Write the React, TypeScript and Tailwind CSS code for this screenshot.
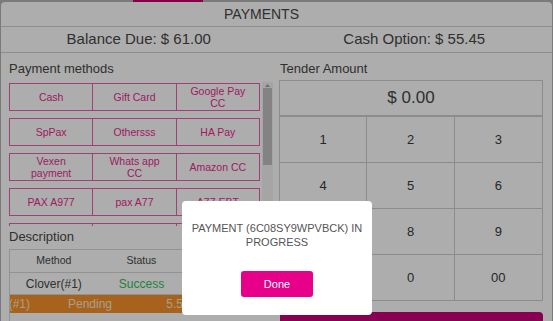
import React from "react";

const methods = [
  ["Cash", "Gift Card", "Google Pay CC"],
  ["SpPax", "Othersss", "HA Pay"],
  ["Vexen payment", "Whats app CC", "Amazon CC"],
  ["PAX A977", "pax A77", "A77 EBT"],
  ["Venmo", "Zelle", "Check"],
];

const keys = ["1", "2", "3", "4", "5", "6", "7", "8", "9", ".", "0", "00"];

const App = () => {
  return (
    <div className="relative w-[553px] h-[321px] overflow-hidden bg-[#b4b4b4] font-['Liberation_Sans',Arial,sans-serif] text-[#474747]">
      <div className="flex h-[2px]">
        <div className="ml-[133px] w-[70px] bg-[#c4006c]" />
      </div>

      <div className="mx-[1px] h-[319px] bg-white rounded-t-[4px] overflow-hidden">
        <div className="h-[25px] flex items-center justify-center pr-[30px] border-b border-[#d0d0d0] text-[14px]">
          PAYMENTS
        </div>
        <div className="h-[26px] flex items-center border-b border-[#d0d0d0] text-[15px]">
          <div className="flex-1 text-center">Balance Due: $ 61.00</div>
          <div className="flex-1 text-center">Cash Option: $ 55.45</div>
        </div>

        <div className="flex gap-[6px] px-[8px] pt-[8px]">
          {/* left column */}
          <div className="w-[264px] flex flex-col">
            <div className="text-[13px] leading-[16px]">Payment methods</div>
            <div className="mt-[5px] h-[144px] shrink-0 flex gap-[2px] overflow-hidden">
              <div className="w-[251px] pt-[1px] flex flex-col gap-[7px]">
                {methods.map((row, i) => (
                  <div key={i} className="grid grid-cols-3 shrink-0 border-r border-[#ef5fae]">
                    {row.map((m) => (
                      <div
                        key={m}
                        className="h-[28px] border-l border-y border-[#ef5fae] flex items-center justify-center text-center px-[8px] text-[10.5px] leading-[12px] text-[#ea2a93]"
                      >
                        {m}
                      </div>
                    ))}
                  </div>
                ))}
              </div>
              <div className="w-[11px] bg-[#f3f3f3] flex flex-col">
                <div className="h-[6px] flex items-center justify-center">
                  <svg width="5" height="3" viewBox="0 0 5 3">
                    <path d="M0 3 L2.5 0 L5 3 Z" fill="#a3a3a3" />
                  </svg>
                </div>
                <div className="mx-[1px] h-[77px] bg-[#c1c1c1]" />
              </div>
            </div>

            <div className="mt-[3px] text-[13px] leading-[16px]">Description</div>
            <div className="mt-[4px] border-l border-[#d8d8d8]">
              <div className="grid grid-cols-3 h-[24px] border-y border-[#d8d8d8] text-[10.5px] items-center text-center">
                <div>Method</div>
                <div>Status</div>
                <div>Amount</div>
              </div>
              <div className="grid grid-cols-3 h-[22px] border-b border-[#d8d8d8] text-[12px] items-center text-center">
                <div>Clover(#1)</div>
                <div className="text-[#32c060]">Success</div>
                <div>55.45</div>
              </div>
              <div className="h-[18px] bg-[#f6932a] overflow-hidden">
                <div className="-ml-[52px] w-[264px] grid grid-cols-3 h-full items-center text-center text-[12px] text-[#fbe7cf]">
                  <div>Clover(#1)</div>
                  <div>Pending</div>
                  <div>5.55</div>
                </div>
              </div>
              <div className="h-[20px] border-b border-[#d8d8d8]" />
            </div>
          </div>

          {/* right column */}
          <div className="w-[264px] flex flex-col">
            <div className="text-[13px] leading-[16px] pl-[1px]">Tender Amount</div>
            <div className="mt-[3px] h-[36px] border border-[#cfcfcf] flex items-center justify-center text-[17px]">
              $ 0.00
            </div>
            <div className="grid grid-cols-3 border-x border-b border-[#cfcfcf]">
              {keys.map((k, i) => (
                <div
                  key={k}
                  className={
                    "h-[46px] flex items-center justify-center text-[13px] text-[#3a3a3a] border-t border-[#cfcfcf] " +
                    (i % 3 !== 2 ? "border-r" : "")
                  }
                >
                  {k}
                </div>
              ))}
            </div>
            <div className="mt-[11px] h-[40px] shrink-0 ml-[1px] bg-[#c8007a] rounded-t-[4px] text-white text-[13px] text-center pt-[8px]">
              Submit
            </div>
          </div>
        </div>
      </div>

      <div className="absolute inset-0 bg-[rgba(0,0,0,0.32)]" />

      <div className="absolute left-[182px] top-[201px] w-[190px] h-[114px] bg-white rounded-[4px] flex flex-col items-center pt-[20px] px-[8px]">
        <p className="text-[11px] leading-[14px] text-[#555] text-center">
          PAYMENT (6C08SY9WPVBCK) IN PROGRESS
        </p>
        <button className="mt-[22px] w-[72px] h-[26px] bg-[#e6008a] rounded-[3px] text-white text-[11px]">
          Done
        </button>
      </div>
    </div>
  );
};

export default App;
